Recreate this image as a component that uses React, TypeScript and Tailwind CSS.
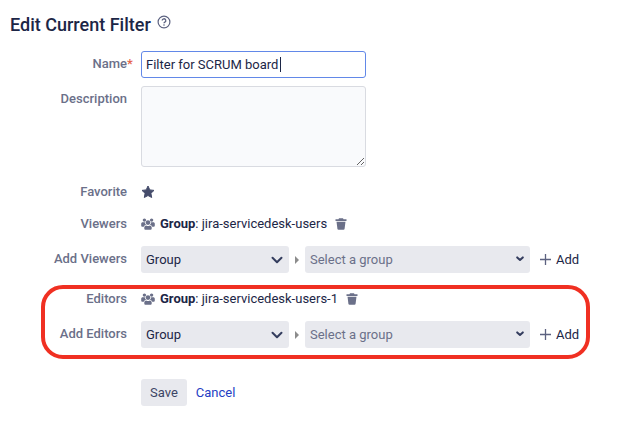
import { ReactNode, useState } from "react";

type RowProps = {
    label: string;
    htmlFor?: string;
    required?: boolean;
    children: ReactNode;
};

const Row = ({ label, htmlFor, required, children }: RowProps) => {
    const Label = htmlFor ? "label" : "div";

    return (
        <div className="flex items-start gap-[14px]">
            <Label
                htmlFor={htmlFor}
                className="relative w-[127px] shrink-0 text-right font-medium leading-[26px] text-[#6b7089]"
            >
                {label}
                {required && (
                    <span className="absolute left-full text-[#e5634b]">*</span>
                )}
            </Label>
            {children}
        </div>
    );
};

const HelpIcon = () => (
    <svg viewBox="0 0 14 14" className="h-[14px] w-[14px]" fill="none" stroke="#5c6280">
        <circle cx="7" cy="7" r="5.9" strokeWidth="1.2" />
        <path d="M5.2 5.6a1.8 1.8 0 1 1 2.7 1.5c-.6.35-.9.6-.9 1.2" strokeWidth="1.3" />
        <circle cx="7" cy="10" r=".8" fill="#5c6280" stroke="none" />
    </svg>
);

const StarIcon = () => (
    <svg viewBox="0 0 14 14" className="h-[14px] w-[14px]" fill="#454c6b" stroke="#454c6b" strokeLinejoin="round">
        <path d="M7 1l1.8 3.9 4.2.5-3.1 2.9.8 4.2L7 10.5l-3.7 2 .8-4.2L1 5.4l4.2-.5z" />
    </svg>
);

const GroupIcon = () => (
    <svg viewBox="0 0 14 12" className="h-3 w-[14px] shrink-0" fill="#6b7089">
        <circle cx="3.4" cy="2.1" r="1.7" />
        <circle cx="10.6" cy="2.1" r="1.7" />
        <path d="M1.8 4.2h2c.1 1.1.6 1.9 1.3 2.5-1.2.3-2 1-2.3 2H1.6C.7 8.7.2 8.2.2 7.4V5.8c0-1 .6-1.6 1.6-1.6z" />
        <path d="M12.2 4.2h-2c-.1 1.100-.6 1.900-1.300 2.500 1.200.3 2 1 2.300 2h1.200c.9 0 1.400-.5 1.400-1.300V5.800c0-1-.6-1.600-1.600-1.600z" />
        <circle cx="7" cy="4.600" r="2.300" />
        <path d="M5.200 7.500c.5.400 1.100.6 1.800.6s1.300-.2 1.800-.6c1.200.2 1.900.9 1.900 2v.9c0 .8-.5 1.300-1.300 1.300H4.600c-.8 0-1.300-.5-1.300-1.300v-.9c0-1.100.7-1.800 1.900-2z" />
    </svg>
);

const TrashIcon = () => (
    <svg viewBox="0 0 12 12" className="mb-px h-3 w-3" fill="#6b7089">
        <path d="M4 .2h4l.5 1h3V3H.5V1.200h3z" />
        <path d="M1.500 3.800h9l-.9 6.900c-.1.600-.5 1-1.100 1h-5c-.6 0-1-.4-1.100-1z" />
    </svg>
);

const Share = ({ name }: { name: string }) => (
    <div className="flex h-[26px] items-center">
        <GroupIcon />
        <span className="ml-[5px]">
            <b className="font-bold">Group</b>: {name}
        </span>
        <button type="button" aria-label={`Remove ${name}`} className="ml-2">
            <TrashIcon />
        </button>
    </div>
);

const selectStyle =
    "h-[27px] w-full appearance-none rounded-[3px] bg-[#e8e9ee] pl-[5px] pr-6 outline-none";

const AddShare = ({ id }: { id: string }) => (
    <div className="flex h-[27px] min-w-0 flex-1 items-center">
        <div className="relative w-[148px] shrink-0">
            <select id={id} className={`${selectStyle} text-[#1c2646]`}>
                <option>Group</option>
            </select>
            <svg
                viewBox="0 0 12 8"
                className="pointer-events-none absolute right-[6px] top-[10px] h-2 w-3"
                fill="none"
                stroke="#343d5e"
                strokeWidth="2"
                strokeLinecap="round"
                strokeLinejoin="round"
            >
                <path d="M1.5 1.8L6 6.3l4.500-4.500" />
            </svg>
        </div>
        <svg viewBox="0 0 4 8" className="mx-[6px] h-2 w-1 shrink-0" fill="#8c8c8c">
            <path d="M0 0l4 4-4 4z" />
        </svg>
        <div className="relative w-full max-w-[225px]">
            <select aria-label="Select a group" className={`${selectStyle} text-[#6b7089]`}>
                <option>Select a group</option>
            </select>
            <svg
                viewBox="0 0 8 6"
                className="pointer-events-none absolute right-[6px] top-[10px] h-[6px] w-2"
                fill="none"
                stroke="#343d5e"
                strokeWidth="2"
                strokeLinecap="round"
                strokeLinejoin="round"
            >
                <path d="M1.2 1.4L4 4l2.8-2.6" />
            </svg>
        </div>
        <button type="button" className="ml-[10px] flex shrink-0 items-center gap-[5px]">
            <svg viewBox="0 0 11 11" className="h-[11px] w-[11px]" stroke="#5c6280" strokeWidth="1.3">
                <path d="M5.5 0v11M0 5.5h11" />
            </svg>
            Add
        </button>
    </div>
);

const App = () => {
    const [name, setName] = useState("Filter for SCRUM board");

    return (
        <main className="min-h-screen bg-white pt-[10px] font-['Roboto',sans-serif] text-[13px] text-[#1c2646]">
            <header className="flex h-7 items-center gap-[6px] pl-[10px]">
                <h1 className="text-[18px] font-medium">Edit Current Filter</h1>
                <button type="button" aria-label="Help" className="mb-1">
                    <HelpIcon />
                </button>
            </header>

            <form className="mt-[13px] w-full max-w-[590px]">
                <div className="flex flex-col gap-2">
                    <Row label="Name" htmlFor="name" required>
                        <div className="relative w-full max-w-[225px]">
                            <input
                                id="name"
                                value={name}
                                onChange={(e) => setName(e.target.value)}
                                className="block h-[27px] w-full rounded-[3px] border border-[#6288e8] bg-white px-1 caret-transparent outline-none"
                            />
                            <span className="absolute left-[139px] top-[6px] h-[15px] w-px bg-[#1c2646]" />
                        </div>
                    </Row>
                    <Row label="Description" htmlFor="description">
                        <textarea
                            id="description"
                            className="block h-[81px] w-full max-w-[225px] rounded-[3px] border border-[#d9dbe1] bg-[#f9fafc] px-1 outline-none"
                        />
                    </Row>
                </div>

                <div className="mt-3 flex flex-col gap-[6px]">
                    <Row label="Favorite">
                        <button type="button" aria-label="Favorite" className="flex h-[26px] items-center">
                            <StarIcon />
                        </button>
                    </Row>
                    <Row label="Viewers">
                        <Share name="jira-servicedesk-users" />
                    </Row>
                </div>
                <div className="mt-[9px]">
                    <Row label="Add Viewers" htmlFor="viewers">
                        <AddShare id="viewers" />
                    </Row>
                </div>

                <div className="relative mt-[13px] flex flex-col gap-[9px]">
                    <Row label="Editors">
                        <Share name="jira-servicedesk-users-1" />
                    </Row>
                    <Row label="Add Editors" htmlFor="editors">
                        <AddShare id="editors" />
                    </Row>
                    <div className="pointer-events-none absolute -bottom-[11px] -top-px left-[41px] right-0 rounded-[22px] border-4 border-[#f03022]" />
                </div>

                <div className="mt-[31px] flex items-center gap-[9px] pl-[141px]">
                    <button
                        type="submit"
                        className="h-[27px] rounded-[3px] bg-[#e8e9ee] px-[9px] text-[#3c4565]"
                    >
                        Save
                    </button>
                    <a href="#" className="text-[#2440c4]">
                        Cancel
                    </a>
                </div>
            </form>
        </main>
    );
};

export default App;
